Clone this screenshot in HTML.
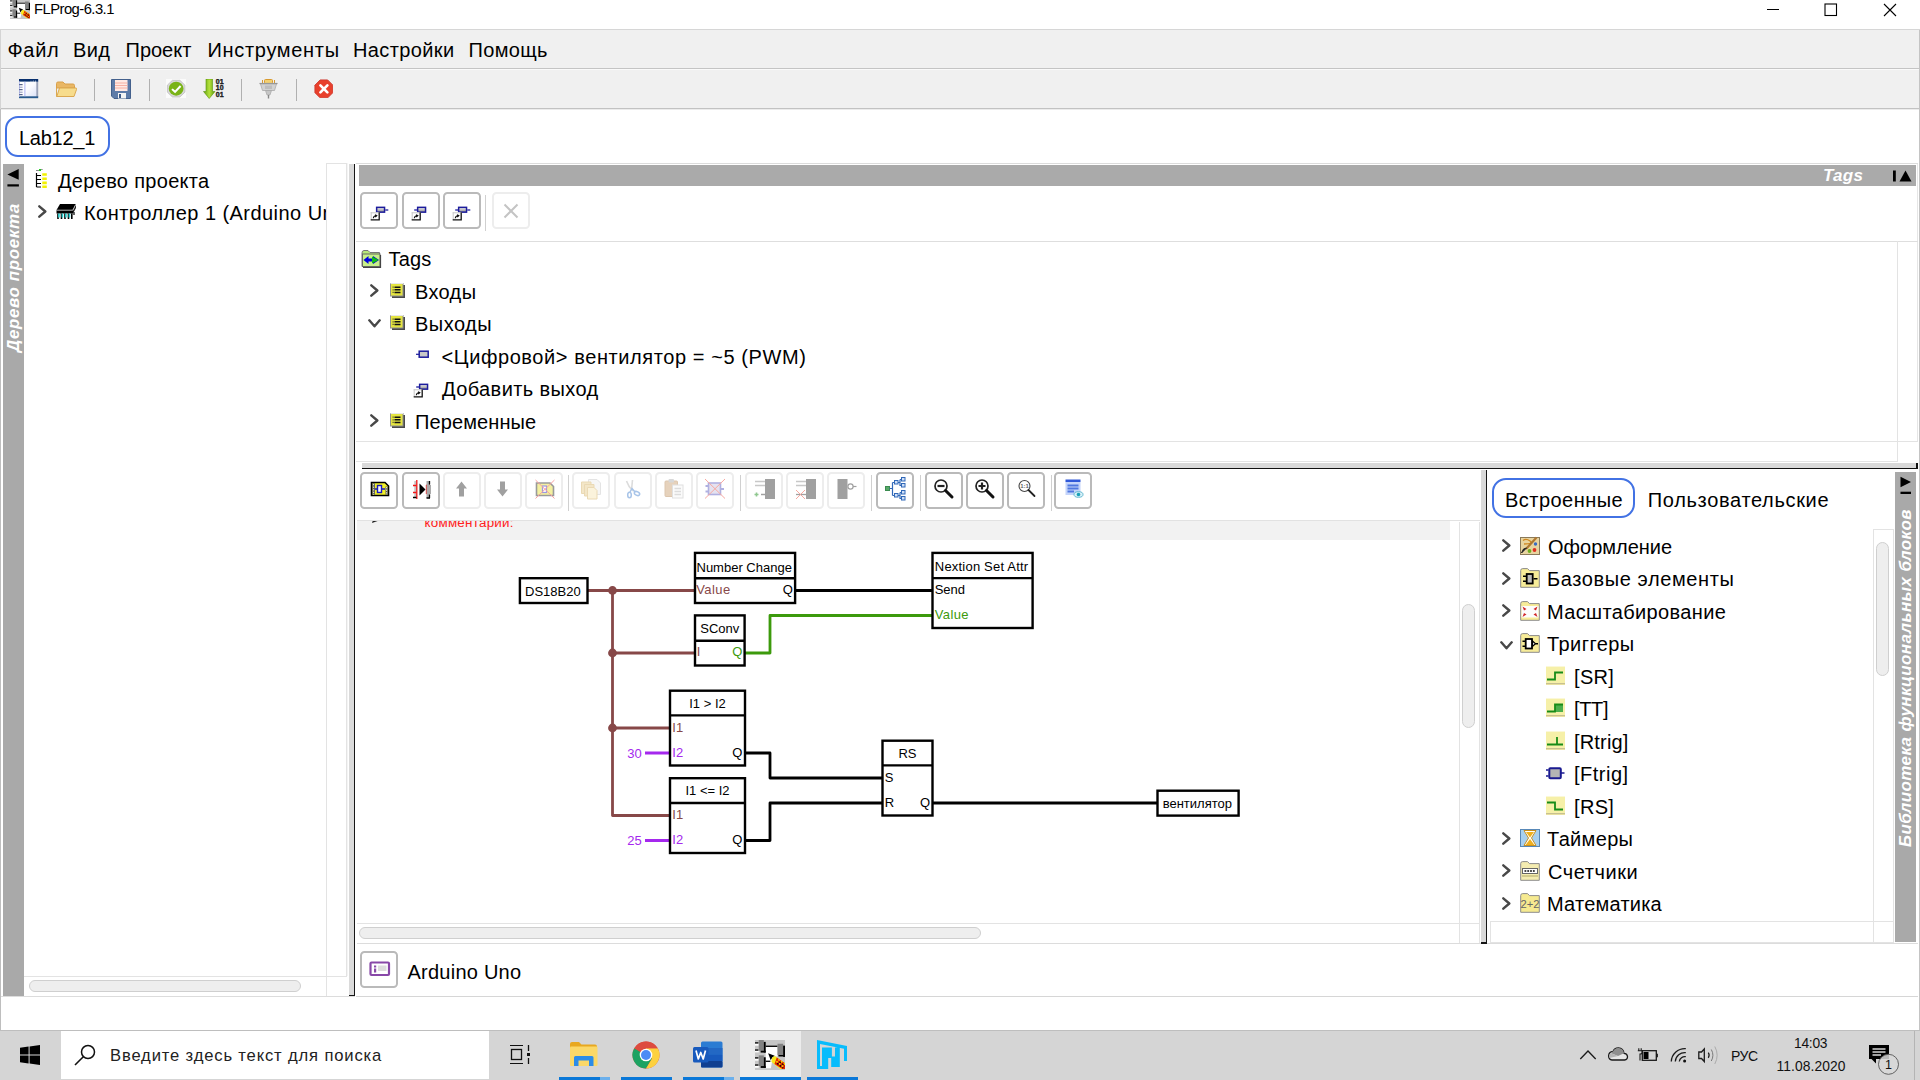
<!DOCTYPE html>
<html lang="ru"><head><meta charset="utf-8"><title>FLProg-6.3.1</title>
<style>
html,body{margin:0;padding:0}
body{width:1920px;height:1080px;overflow:hidden;background:#fff;position:relative;font-family:"Liberation Sans",sans-serif;}
.t{position:absolute;line-height:1;white-space:nowrap;font-family:"Liberation Sans",sans-serif;}
.r{position:absolute;display:block}
.btn{position:absolute;box-sizing:border-box;width:38px;height:37px;margin-left:-0.6px;border:2.3px solid #bababa;border-radius:4.5px;background:#fff}
.btn.dis{border-color:#ededed}
.bi{font-weight:bold;font-style:italic}
svg text{font-family:"Liberation Sans",sans-serif}
</style></head><body>
<!-- ===== window title bar ===== -->
<div id="titlebar">
<svg class="r" style="left:10px;top:-1px;" width="20" height="20" viewBox="0 0 16 16"><rect width="16" height="16" fill="#c6c6c6"/>
<path d="M5.700 3.600H12V8.800H9.500L8.500 15H5.700Z" fill="#fff"/><rect x="0" y="1.800" width="2" height="1.200" fill="#fff"/><rect x="0" y="5.600" width="2" height="1" fill="#fff"/><rect x="0" y="9.800" width="2" height="1.200" fill="#fff"/><rect x="0" y="13.600" width="2" height="1.200" fill="#fff"/>
<rect x="2" y="0" width="2.700" height="5.700" fill="#828282"/><rect x="4.700" y="1" width="1" height="5.700" fill="#000"/><rect x="3" y="5.700" width="2.700" height="1" fill="#000"/>
<rect x="0" y="1.200" width="1.800" height="0.700" fill="#000"/><rect x="0" y="5" width="1.800" height="0.700" fill="#000"/>
<rect x="5.700" y="3" width="6.300" height="0.700" fill="#000"/>
<rect x="12" y="2" width="3" height="6" fill="#828282"/><rect x="15" y="3" width="1" height="6" fill="#000"/><rect x="12.500" y="8" width="3.500" height="0.800" fill="#000"/>
<rect x="2" y="8.200" width="2.700" height="5.700" fill="#828282"/><rect x="4.700" y="9.200" width="1" height="5.700" fill="#000"/><rect x="3" y="13.900" width="2.700" height="1" fill="#000"/>
<rect x="0" y="9.200" width="1.800" height="0.700" fill="#000"/><rect x="0" y="13" width="1.800" height="0.700" fill="#000"/>
<rect x="5.700" y="11" width="2.500" height="0.700" fill="#000"/>
<path d="M7 7L10.500 8.400L9.200 9.300L8.400 10.800Z" fill="#000"/>
<path d="M9.200 9.300L10.600 8.500L16 12.400V15.400H13.400L8.700 11.600Z" fill="#f8e818"/>
<path d="M11.600 9.300L16 12.400V15.400H14.600L10.400 12.800Z" fill="#e42400"/>
<path d="M11.400 11.400L15.500 14.600M12.400 10.400L16 13" stroke="#f8e000" stroke-width="0.800" stroke-dasharray="0.900 0.900"/>
<path d="M11.800 12.400L15 14.900M13 11.600L16 13.800" stroke="#200000" stroke-width="0.800" stroke-dasharray="0.900 0.900"/></svg>
<div class="t" style="left:34.00px;top:2.37px;font-size:14.8px;color:#000;letter-spacing:-0.545px;">FLProg-6.3.1</div>
<svg class="r" style="left:1760px;top:0px;" width="150" height="22" viewBox="0 0 150 22">
<path d="M7 9.5H19" stroke="#000" stroke-width="1"/>
<rect x="65" y="4" width="11.5" height="11.5" fill="none" stroke="#000" stroke-width="1.1"/>
<path d="M124 4L136 16M136 4L124 16" stroke="#000" stroke-width="1.1"/>
</svg>
</div>
<div class="r" style="left:0px;top:29px;width:1920px;height:1px;background:#d6d6d6;"></div>
<!-- ===== menu bar ===== -->
<div id="menubar">
<div class="r" style="left:1px;top:30px;width:1918px;height:38px;background:#f0f0f0;"></div>
<div class="t" style="left:7.50px;top:40.07px;font-size:20px;color:#000;letter-spacing:0.667px;">Файл</div>
<div class="t" style="left:73.00px;top:40.07px;font-size:20px;color:#000;letter-spacing:0.400px;">Вид</div>
<div class="t" style="left:125.50px;top:40.07px;font-size:20px;color:#000;">Проект</div>
<div class="t" style="left:207.50px;top:40.07px;font-size:20px;color:#000;letter-spacing:0.680px;">Инструменты</div>
<div class="t" style="left:353.00px;top:40.07px;font-size:20px;color:#000;letter-spacing:0.377px;">Настройки</div>
<div class="t" style="left:468.50px;top:40.07px;font-size:20px;color:#000;letter-spacing:0.320px;">Помощь</div>
</div>
<div class="r" style="left:0px;top:68px;width:1919px;height:1px;background:#c4c4c4;"></div>
<!-- ===== main toolbar ===== -->
<div id="toolbar">
<div class="r" style="left:1px;top:69px;width:1918px;height:39px;background:#f0f0f0;"></div>
<div class="r" style="left:1px;top:69px;width:1918px;height:1px;background:#fafafa;"></div>
<svg class="r" style="left:18.7px;top:78.9px;" width="20" height="20" viewBox="0 0 20 20">
<defs><linearGradient id="g1" x1="0" y1="0" x2="1" y2="1"><stop offset="0" stop-color="#fff"/><stop offset="0.5" stop-color="#fbfbff"/><stop offset="1" stop-color="#d4dcf6"/></linearGradient></defs>
<rect x="0.300" y="0.300" width="18.700" height="18.700" fill="url(#g1)"/>
<rect x="17.300" y="2" width="1.900" height="16" fill="#9aa2b8"/>
<rect x="0" y="0" width="19.200" height="2.600" fill="#08306e"/>
<path d="M11.500 2.600L12 1.500L12.500 2.600ZM13.500 2.600L14.200 1.200L14.800 2.600ZM16 2.600L16.600 1.200L17.200 2.600Z" fill="#fff"/>
<rect x="0" y="17.300" width="19.200" height="1.900" fill="#285a8e"/>
<rect x="0" y="2.600" width="0.900" height="15" fill="#b8c0f0"/>
<path d="M5.900 2.600V17.300" stroke="#a4acf2" stroke-width="0.900"/>
<path d="M0.200 5.700h3.400M0.200 10.700h3.400M0.200 15.700h3.400" stroke="#1a2a60" stroke-width="0.900"/><path d="M0.200 8.200h3.400M0.200 13.200h3.400" stroke="#8088b0" stroke-width="0.900"/>
</svg>
<svg class="r" style="left:56px;top:80px;" width="21" height="18" viewBox="0 0 21 18">
<path d="M0.500 3.5 Q0.5 2 2 2 H7 L9 4 H17 Q18.5 4 18.5 5.5 V8 H0.5Z" fill="#e9b765" stroke="#d9a04a" stroke-width="1"/>
<path d="M3.500 8 H20 Q21 8 20.500 9.500 L18 16.500 H0.800 Z" fill="#f7dc8c" stroke="#dba850" stroke-width="1"/>
<path d="M0.500 8 V16.5 H2" fill="none" stroke="#dba850" stroke-width="1"/>
</svg>
<div class="r" style="left:94px;top:79px;width:1px;height:22px;background:#b0b0b0;"></div>
<svg class="r" style="left:111px;top:79px;" width="21" height="21" viewBox="0 0 21 21">
<path d="M0.500 0.500 H19.500 V19.500 H3 L0.500 17Z" fill="#5d7ba8" stroke="#43608c" stroke-width="1"/>
<rect x="4" y="1" width="12.500" height="11" fill="#ffe9e4"/>
<path d="M4 4h12.500M4 6.500h12.500M4 9h12.500" stroke="#f6a99c" stroke-width="0.9"/>
<rect x="7" y="14" width="8" height="5.500" fill="#f4f4f4"/>
<rect x="8" y="15" width="2" height="4" fill="#3c5a88"/>
</svg>
<div class="r" style="left:149px;top:79px;width:1px;height:22px;background:#b0b0b0;"></div>
<svg class="r" style="left:166px;top:79px" width="20.300" height="19.300" viewBox="0 0 22 22" preserveAspectRatio="none">
<rect width="22" height="22" fill="#fbfbfb"/>
<path d="M7 1.500H15L20.500 7V15L15 20.500H7L1.500 15V7Z" fill="#d8d8d8" stroke="#c2c2c2" stroke-width="1"/>
<circle cx="11" cy="11" r="8" fill="#7ab317"/>
<path d="M6.500 11.500L9.800 14.600L15.800 8" fill="none" stroke="#fff" stroke-width="2.200"/>
</svg>
<svg class="r" style="left:203px;top:79px;" width="22" height="20" viewBox="0 0 22 20">
<defs><linearGradient id="g5" x1="0" x2="1"><stop offset="0" stop-color="#5e9c0c"/><stop offset="0.5" stop-color="#b5e23c"/><stop offset="1" stop-color="#5e9c0c"/></linearGradient></defs>
<path d="M3 0H9.500V12.500H12L6.200 19.500L0.500 12.500H3Z" fill="url(#g5)" stroke="#5a960a" stroke-width="0.6"/>
<g font-size="7" font-weight="bold" fill="#1c1c1c" stroke="#1c1c1c" stroke-width="0.350"><text x="12.800" y="4.800">01</text><text x="12.800" y="11.200">10</text><text x="12.800" y="18">01</text></g>
</svg>
<div class="r" style="left:241px;top:79px;width:1px;height:22px;background:#b0b0b0;"></div>
<svg class="r" style="left:259px;top:79px;" width="20" height="20" viewBox="0 0 20 20">
<rect x="5.500" y="0.500" width="8" height="4" rx="1" fill="#f3d070" stroke="#d89a30" stroke-width="1"/>
<path d="M3.500 1V4M15.500 1V4" stroke="#d89a30" stroke-width="1"/>
<path d="M0.500 4.500H18.500" stroke="#8e8e8e" stroke-width="1.200"/>
<path d="M1.500 5H17.500L15.500 11.500H3.500Z" fill="#d2d2d2" stroke="#aaa" stroke-width="0.8"/>
<rect x="6" y="6.500" width="7" height="3.500" fill="#bdbdbd"/>
<path d="M6.500 11.500H12.500L11 16H8Z" fill="#c6c6c6" stroke="#a6a6a6" stroke-width="0.7"/>
<path d="M9.500 16V19.500" stroke="#888" stroke-width="1.400"/>
</svg>
<div class="r" style="left:296px;top:79px;width:1px;height:22px;background:#b0b0b0;"></div>
<svg class="r" style="left:313.5px;top:78.7px;" width="19.8" height="19.8" viewBox="0 0 21 21">
<path d="M6.500 1H14.500L20 6.500V14.500L14.500 20H6.500L1 14.500V6.500Z" fill="#e8402c" stroke="#cf3a30" stroke-width="1"/>
<path d="M6.800 6.800L14.200 14.200M14.200 6.800L6.800 14.200" stroke="#fff" stroke-width="2.800" stroke-linecap="round"/>
</svg>
</div>
<div class="r" style="left:0px;top:108px;width:1919px;height:1px;background:#c2c2c2;"></div>
<div class="r" style="left:1px;top:109px;width:1918px;height:1px;background:#ececec;"></div>
<div class="r" style="left:0px;top:30px;width:1px;height:79px;background:#d4d4d4;"></div>
<div class="r" style="left:0px;top:109px;width:1px;height:922px;background:#bebebe;"></div>
<div class="r" style="left:1919px;top:30px;width:1px;height:1001px;background:#c4c4c4;"></div>
<div class="r" style="left:1917px;top:163px;width:1px;height:279px;background:#e6e6e6;"></div>
<div class="r" style="left:0px;top:1030px;width:1920px;height:1px;background:#bebebe;"></div>
<!-- ===== project tab ===== -->
<div class="r" style="left:5px;top:116px;width:105px;height:41px;box-sizing:border-box;border:2px solid #4272e4;border-radius:13px"></div>
<div class="t" style="left:19.00px;top:128.07px;font-size:20px;color:#000;letter-spacing:-0.267px;">Lab12_1</div>
<!-- ===== left: project tree panel ===== -->
<div id="projtree">
<div class="r" style="left:3px;top:164px;width:21px;height:832px;background:#a9a9a9;"></div>
<svg class="r" style="left:7px;top:168px;" width="14" height="20" viewBox="0 0 14 20"><path d="M11.700 1V11.800L0.400 6.400Z" fill="#000"/><rect x="0.400" y="16.300" width="11.500" height="2.200" fill="#000"/></svg>
<div class="t bi" style="left:4px;top:351.500px;font-size:17px;letter-spacing:0.600px;color:#fff;transform-origin:0 0;transform:rotate(-90deg);width:150px;height:19px;line-height:19px;">Дерево проекта</div>
<svg class="r" style="left:32px;top:169px;" width="16" height="20" viewBox="0 0 16 20">
<path d="M4 1.500h3M9 0.500L11 0" stroke="#888" stroke-width="1"/><rect x="7" y="0" width="2" height="2" fill="#2c2"/>
<path d="M4.500 4V18M4.500 6.500H9M4.500 10.500H9M4.500 14.500H9M4.500 18H9" fill="none" stroke="#000" stroke-width="1.200"/>
<path d="M10.300 5.500h4.500M10.300 9.700h4.500M10.300 13.900h4.500M10.300 17.800h4.500" stroke="#f2f200" stroke-width="2.600"/>
</svg>
<div class="t" style="left:58.00px;top:170.57px;font-size:20px;color:#000;letter-spacing:0.307px;">Дерево проекта</div>
<svg class="r" style="left:38px;top:204.8px;" width="9" height="13" viewBox="0 0 9 13"><path d="M1.300 1.300L7.300 6.500L1.300 11.700" fill="none" stroke="#484848" stroke-width="2.400" stroke-linecap="round" stroke-linejoin="round"/></svg>
<svg class="r" style="left:56px;top:203px;" width="21" height="18" viewBox="0 0 21 18">
<path d="M4 1H20L17 7H0.500Z" fill="#000"/>
<rect x="0.500" y="7" width="16.500" height="3.500" fill="#000"/>
<path d="M17 7L20 1V5L17 10.500Z" fill="#222"/>
<path d="M2 10.500V16M5.500 10.500V16M9 10.500V16M12.500 10.500V16M15.800 10.500V16" stroke="#000" stroke-width="1.600"/>
<path d="M2.900 10.500V14.500M6.400 10.500V14.500M9.900 10.500V14.500M13.400 10.500V14.500" stroke="#28d0d0" stroke-width="1.600"/>
<path d="M18 9V12" stroke="#000" stroke-width="1.200"/><path d="M0.500 7.200H16.800L19.800 1.300" fill="none" stroke="#fff" stroke-width="0.700"/>
</svg>
<div class="r" style="left:80px;top:196px;width:246px;height:32px;overflow:hidden"><div class="t" style="left:4.00px;top:7.07px;font-size:20px;color:#000;letter-spacing:0.45px;">Контроллер 1 (Arduino Uno)</div>
</div>
<div class="r" style="left:326px;top:163px;width:21px;height:1px;background:#e3e3e3;"></div>
<div class="r" style="left:326px;top:163px;width:1px;height:833px;background:#e3e3e3;"></div>
<div class="r" style="left:346px;top:163px;width:1px;height:813px;background:#e3e3e3;"></div>
<div class="r" style="left:347px;top:163px;width:1px;height:813px;background:#f4f4f4;"></div>
<div class="r" style="left:24px;top:976px;width:323px;height:1px;background:#e3e3e3;"></div>
<div class="r" style="left:1px;top:996px;width:354px;height:1px;background:#dcdcdc;"></div>
<div class="r" style="left:29px;top:980px;width:272px;height:12px;box-sizing:border-box;border:1px solid #cfcfcf;border-radius:6px;background:#eee"></div>
</div>
<div class="r" style="left:349px;top:164px;width:4.7px;height:832px;background:#dadada;"></div>
<div class="r" style="left:353.6px;top:164px;width:1.6px;height:832px;background:#161616;"></div>
<div class="r" style="left:349px;top:994.7px;width:6px;height:1.5px;background:#161616;"></div>
<!-- ===== tags panel ===== -->
<div id="tags">
<div class="r" style="left:356px;top:163px;width:1562px;height:1px;background:#dcdcdc;"></div>
<div class="r" style="left:359px;top:165.2px;width:1557px;height:21.2px;background:#aaaaaa;"></div>
<div class="t bi" style="left:1823.00px;top:166.91px;font-size:17px;color:#fff;letter-spacing:0.333px;">Tags</div>
<svg class="r" style="left:1892px;top:170px;" width="21" height="12" viewBox="0 0 21 12"><rect x="1" y="0.500" width="2.800" height="11" fill="#000"/><path d="M7.500 11.500L13.500 0.500L19.500 11.500Z" fill="#000"/></svg>
<div class="btn" style="left:361px;top:191.700px"></div>
<svg class="r" style="left:369.7px;top:205.7px;" width="19" height="16" viewBox="0 0 19 16"><defs><linearGradient id="gio" x1="0" y1="0" x2="0" y2="1"><stop offset="0" stop-color="#f4f4f4"/><stop offset="1" stop-color="#8a8a8a"/></linearGradient></defs>
<rect x="6.650" y="1.350" width="7.900" height="4.800" fill="url(#gio)" stroke="#1c1c9c" stroke-width="1.500"/><path d="M15.300 4H18.300" stroke="#1c1c9c" stroke-width="1.300"/>
<rect x="0.700" y="6.300" width="9" height="8" fill="#fff"/>
<path d="M0.700 6.800H9M1.200 6.300V14" stroke="#c8c8c8" stroke-width="1" fill="none"/>
<path d="M9.200 6.300V13.800H0.700" stroke="#111" stroke-width="1.300" fill="none"/>
<path d="M3.300 12.300Q3.500 9.800 6.300 9.700M5 8.800L6.800 9.700L5.300 11.200" fill="none" stroke="#111" stroke-width="1.100"/></svg>
<div class="btn" style="left:402.25px;top:191.700px"></div>
<svg class="r" style="left:410.95px;top:205.7px;" width="19" height="16" viewBox="0 0 19 16"><defs><linearGradient id="gio" x1="0" y1="0" x2="0" y2="1"><stop offset="0" stop-color="#f4f4f4"/><stop offset="1" stop-color="#8a8a8a"/></linearGradient></defs>
<rect x="6.650" y="1.350" width="7.900" height="4.800" fill="url(#gio)" stroke="#1c1c9c" stroke-width="1.500"/><path d="M3.200 4H6" stroke="#1c1c9c" stroke-width="1.300"/>
<rect x="0.700" y="6.300" width="9" height="8" fill="#fff"/>
<path d="M0.700 6.800H9M1.200 6.300V14" stroke="#c8c8c8" stroke-width="1" fill="none"/>
<path d="M9.200 6.300V13.800H0.700" stroke="#111" stroke-width="1.300" fill="none"/>
<path d="M3.300 12.300Q3.500 9.800 6.300 9.700M5 8.800L6.800 9.700L5.300 11.200" fill="none" stroke="#111" stroke-width="1.100"/></svg>
<div class="btn" style="left:443.5px;top:191.700px"></div>
<svg class="r" style="left:452.2px;top:205.7px;" width="19" height="16" viewBox="0 0 19 16"><defs><linearGradient id="gio" x1="0" y1="0" x2="0" y2="1"><stop offset="0" stop-color="#f4f4f4"/><stop offset="1" stop-color="#8a8a8a"/></linearGradient></defs>
<rect x="6.650" y="1.350" width="7.900" height="4.800" fill="url(#gio)" stroke="#1c1c9c" stroke-width="1.500"/><path d="M15.300 4H18.300" stroke="#1c1c9c" stroke-width="1.300"/><path d="M3.200 4H6" stroke="#1c1c9c" stroke-width="1.300"/>
<rect x="0.700" y="6.300" width="9" height="8" fill="#fff"/>
<path d="M0.700 6.800H9M1.200 6.300V14" stroke="#c8c8c8" stroke-width="1" fill="none"/>
<path d="M9.200 6.300V13.800H0.700" stroke="#111" stroke-width="1.300" fill="none"/>
<path d="M3.300 12.300Q3.500 9.800 6.300 9.700M5 8.800L6.800 9.700L5.300 11.200" fill="none" stroke="#111" stroke-width="1.100"/></svg>
<div class="r" style="left:485px;top:195px;width:1px;height:36px;background:#d0d0d0;"></div>
<div class="btn dis" style="left:492.500px;top:191.700px"></div>
<svg class="r" style="left:503px;top:202.5px;" width="16" height="16" viewBox="0 0 16 16"><path d="M1.500 1.500L14.500 14.500M14.500 1.500L1.500 14.500" stroke="#c4c4c4" stroke-width="2"/></svg>
<div class="r" style="left:356px;top:241px;width:1562px;height:1px;background:#dedede;"></div>
<div class="r" style="left:1897px;top:241px;width:1px;height:220px;background:#e3e3e3;"></div>
<svg class="r" style="left:361px;top:249px;" width="21" height="19" viewBox="0 0 21 19">
<path d="M1 4Q1 1.500 3 1.500H7L9 3.500H18.500V17.500H1Z" fill="#b8e878" stroke="#777" stroke-width="1"/>
<rect x="1.500" y="5" width="17.500" height="12.500" fill="#c8f088" stroke="#666" stroke-width="1"/>
<path d="M19.500 6V18.500H2" fill="none" stroke="#444" stroke-width="1.200"/>
<path d="M2.500 11L7.500 7V9.500H12V7L18 11L12 15V12.500H7.500V15Z" fill="#0000e0"/>
<path d="M11 7.500L17.500 11L11 14.500Z" fill="#10c010"/>
</svg>
<div class="t" style="left:388.50px;top:249.32px;font-size:20px;color:#000;letter-spacing:0.200px;">Tags</div>
<svg class="r" style="left:370px;top:284px;" width="9" height="13" viewBox="0 0 9 13"><path d="M1.300 1.300L7.300 6.500L1.300 11.700" fill="none" stroke="#484848" stroke-width="2.400" stroke-linecap="round" stroke-linejoin="round"/></svg>
<svg class="r" style="left:390px;top:282.5px;" width="16" height="16" viewBox="0 0 16 16"><rect x="2" y="2" width="13" height="13" fill="#4a4a4a"/>
<rect x="0.500" y="0.500" width="12.500" height="12.500" fill="#e4e440" stroke="#909090" stroke-width="1"/>
<path d="M0.500 0.500H13" stroke="#e8e8e8" stroke-width="1"/>
<path d="M4.500 4.200H10.500M4.500 6.800H10.500M4.500 9.400H10.500" stroke="#111" stroke-width="1.500"/>
<path d="M2.600 4.200H3.600M2.600 6.800H3.600M2.600 9.400H3.600" stroke="#333" stroke-width="1.200"/></svg>
<div class="t" style="left:415.00px;top:281.82px;font-size:20px;color:#000;letter-spacing:0.350px;">Входы</div>
<svg class="r" style="left:368px;top:319px;" width="13" height="9" viewBox="0 0 13 9"><path d="M1.300 1.300L6.500 7.300L11.700 1.300" fill="none" stroke="#484848" stroke-width="2.400" stroke-linecap="round" stroke-linejoin="round"/></svg>
<svg class="r" style="left:390px;top:315px;" width="16" height="16" viewBox="0 0 16 16"><rect x="2" y="2" width="13" height="13" fill="#4a4a4a"/>
<rect x="0.500" y="0.500" width="12.500" height="12.500" fill="#e4e440" stroke="#909090" stroke-width="1"/>
<path d="M0.500 0.500H13" stroke="#e8e8e8" stroke-width="1"/>
<path d="M4.500 4.200H10.500M4.500 6.800H10.500M4.500 9.400H10.500" stroke="#111" stroke-width="1.500"/>
<path d="M2.600 4.200H3.600M2.600 6.800H3.600M2.600 9.400H3.600" stroke="#333" stroke-width="1.200"/></svg>
<div class="t" style="left:415.00px;top:314.32px;font-size:20px;color:#000;letter-spacing:0.480px;">Выходы</div>
<svg class="r" style="left:416px;top:350px;" width="14" height="9" viewBox="0 0 14 9"><path d="M0 4.300H3" stroke="#1c1c9c" stroke-width="1.200"/><rect x="3.200" y="1.200" width="9" height="6" fill="#c8c8c8" stroke="#1c1c9c" stroke-width="1.500"/></svg>
<div class="t" style="left:441.50px;top:346.82px;font-size:20px;color:#000;letter-spacing:0.587px;">&lt;Цифровой&gt; вентилятор = ~5 (PWM)</div>
<svg class="r" style="left:413.2px;top:383px;" width="19" height="16" viewBox="0 0 19 16"><defs><linearGradient id="gio" x1="0" y1="0" x2="0" y2="1"><stop offset="0" stop-color="#f4f4f4"/><stop offset="1" stop-color="#8a8a8a"/></linearGradient></defs>
<rect x="6.650" y="1.350" width="7.900" height="4.800" fill="url(#gio)" stroke="#1c1c9c" stroke-width="1.500"/><path d="M3.200 4H6" stroke="#1c1c9c" stroke-width="1.300"/>
<rect x="0.700" y="6.300" width="9" height="8" fill="#fff"/>
<path d="M0.700 6.800H9M1.200 6.300V14" stroke="#c8c8c8" stroke-width="1" fill="none"/>
<path d="M9.200 6.300V13.800H0.700" stroke="#111" stroke-width="1.300" fill="none"/>
<path d="M3.300 12.300Q3.500 9.800 6.300 9.700M5 8.800L6.800 9.700L5.300 11.200" fill="none" stroke="#111" stroke-width="1.100"/></svg>
<div class="t" style="left:442.00px;top:379.32px;font-size:20px;color:#000;letter-spacing:0.400px;">Добавить выход</div>
<svg class="r" style="left:370px;top:414px;" width="9" height="13" viewBox="0 0 9 13"><path d="M1.300 1.300L7.300 6.500L1.300 11.700" fill="none" stroke="#484848" stroke-width="2.400" stroke-linecap="round" stroke-linejoin="round"/></svg>
<svg class="r" style="left:390px;top:412.5px;" width="16" height="16" viewBox="0 0 16 16"><rect x="2" y="2" width="13" height="13" fill="#4a4a4a"/>
<rect x="0.500" y="0.500" width="12.500" height="12.500" fill="#e4e440" stroke="#909090" stroke-width="1"/>
<path d="M0.500 0.500H13" stroke="#e8e8e8" stroke-width="1"/>
<path d="M4.500 4.200H10.500M4.500 6.800H10.500M4.500 9.400H10.500" stroke="#111" stroke-width="1.500"/>
<path d="M2.600 4.200H3.600M2.600 6.800H3.600M2.600 9.400H3.600" stroke="#333" stroke-width="1.200"/></svg>
<div class="t" style="left:415.00px;top:411.82px;font-size:20px;color:#000;letter-spacing:0.111px;">Переменные</div>
<div class="r" style="left:356px;top:441px;width:1562px;height:1px;background:#e3e3e3;"></div>
<div class="r" style="left:356px;top:461px;width:1542px;height:1px;background:#e3e3e3;"></div>
<div class="r" style="left:362px;top:463px;width:1556px;height:5px;background:#d9d9d9;"></div>
<div class="r" style="left:362px;top:467.6px;width:1556px;height:1.7px;background:#111;"></div>
<div class="r" style="left:1916.3px;top:463px;width:1.5px;height:5px;background:#111;"></div>
</div>
<!-- ===== editor toolbar ===== -->
<div id="edtoolbar">
<div class="btn" style="left:361px;top:471.6px"><svg class="r" style="left:-1.700px;top:-2.300px" width="37" height="37" viewBox="0 0 37 37"><path d="M10.500 11.500H24L27.500 15V24.500H10.500Z" fill="#f0f028" stroke="#000" stroke-width="1.600"/>
<path d="M11.300 12.300H14V23.700H11.300ZM24.500 15.500H26.700V23.700H24.500Z" fill="#5c5c5c"/>
<path d="M12.600 13V24M25.600 16V24" stroke="#e8e8e8" stroke-width="1" stroke-dasharray="1.300 1.300"/>
<rect x="16.500" y="14.500" width="4" height="7" fill="#fff" stroke="#1818c0" stroke-width="1.400"/><path d="M14 18H16.500M20.500 18H24" stroke="#1818c0" stroke-width="1.300"/></svg></div>
<div class="btn" style="left:402.25px;top:471.6px"><svg class="r" style="left:-1.700px;top:-2.300px" width="37" height="37" viewBox="0 0 37 37"><rect x="12.300" y="10" width="2.200" height="17" fill="#c4c4c4"/><path d="M14.800 9V28M24.500 14V23" stroke="#f01818" stroke-width="1.300"/>
<path d="M11 14.500H14.500M11 21.500H14.500M24.500 14H28M24.500 22.500H28" stroke="#f01818" stroke-width="1.300"/>
<path d="M11 26.500H14.500" stroke="#000" stroke-width="1.500"/>
<path d="M17.500 12.500L23.500 18.500L17.500 24.500Z" fill="#000"/>
<path d="M24.500 10H27.500V14H29V23H27.500V27H24.500Z" fill="#aaa"/><path d="M27.500 10V13.500M27.500 23.500V27M24.500 27H28" stroke="#000" stroke-width="1.300"/></svg></div>
<div class="btn dis" style="left:443.5px;top:471.6px"><svg class="r" style="left:-1.700px;top:-2.300px" width="37" height="37" viewBox="0 0 37 37"><path d="M18.500 10.500L24 17.500H21V25.500H16V17.500H13Z" fill="#a0a0a0"/></svg></div>
<div class="btn dis" style="left:484.75px;top:471.6px"><svg class="r" style="left:-1.700px;top:-2.300px" width="37" height="37" viewBox="0 0 37 37"><path d="M18.500 25.500L24 18.500H21V10.500H16V18.500H13Z" fill="#a0a0a0"/></svg></div>
<div class="btn dis" style="left:526px;top:471.6px"><svg class="r" style="left:-1.700px;top:-2.300px" width="37" height="37" viewBox="0 0 37 37"><path d="M10.500 12H24L27.500 15.500V24.500H10.500Z" fill="#f4f0a0" stroke="#9a9a9a" stroke-width="1.600"/>
<rect x="16.500" y="15" width="4" height="6.500" fill="#fff" stroke="#9a9ae0" stroke-width="1.200"/>
<path d="M9.500 9L28.500 27.500M28.500 9L9.500 27.500" stroke="#f8a0a0" stroke-width="1"/></svg></div>
<div class="btn dis" style="left:573px;top:471.6px"><svg class="r" style="left:-1.700px;top:-2.300px" width="37" height="37" viewBox="0 0 37 37"><path d="M15.500 8.500H24L27.500 12V23.500H15.500Z" fill="#f6f6f6" stroke="#e4e4e4"/>
<path d="M8.500 11H18V22.500H8.500Z" fill="#f3e6c8" stroke="#ead9b4"/>
<path d="M11.500 13.500H21V25H11.500Z" fill="#f3e6c8" stroke="#ead9b4"/>
<path d="M14.500 16.500H21L24 19.500V28H14.500Z" fill="#fbf3dc" stroke="#ead9b4"/></svg></div>
<div class="btn dis" style="left:614.25px;top:471.6px"><svg class="r" style="left:-1.700px;top:-2.300px" width="37" height="37" viewBox="0 0 37 37"><path d="M12.500 10Q14.500 16 19 20M18.500 9L17.500 19" fill="none" stroke="#dcdcdc" stroke-width="1.600"/>
<ellipse cx="15.500" cy="24" rx="1.800" ry="2.800" fill="none" stroke="#a8c4e8" stroke-width="1.500"/>
<ellipse cx="23" cy="22.500" rx="2.800" ry="1.800" fill="none" stroke="#a8c4e8" stroke-width="1.500" transform="rotate(25 23 22.500)"/>
<path d="M16 21L18 17.500L21 21" fill="none" stroke="#a8c4e8" stroke-width="1.500"/></svg></div>
<div class="btn dis" style="left:655.5px;top:471.6px"><svg class="r" style="left:-1.700px;top:-2.300px" width="37" height="37" viewBox="0 0 37 37"><rect x="10" y="10" width="12.500" height="15.500" rx="1" fill="#e6d2bc" stroke="#dcc6ae"/>
<rect x="13.500" y="8" width="5.500" height="3.500" rx="1" fill="#d8d8d8"/>
<rect x="17.500" y="14" width="10.500" height="13" fill="#fbfbfb" stroke="#e0e0e0"/>
<path d="M19.500 17.500H26M19.500 20.500H26M19.500 23.500H26" stroke="#dcdcdc" stroke-width="1.300"/></svg></div>
<div class="btn dis" style="left:696.75px;top:471.6px"><svg class="r" style="left:-1.700px;top:-2.300px" width="37" height="37" viewBox="0 0 37 37"><rect x="12.500" y="12" width="12" height="11.500" fill="#e4e2f0" stroke="#b0b0e0" stroke-width="1.600"/>
<path d="M9.500 15H12.500M9.500 20.500H12.500M24.500 18H28" stroke="#b0b0e0" stroke-width="1.800"/>
<path d="M9 8L29 27.500M29 8L9 27.500" stroke="#f8a8a0" stroke-width="1"/></svg></div>
<div class="btn dis" style="left:745.5px;top:471.6px"><svg class="r" style="left:-1.700px;top:-2.300px" width="37" height="37" viewBox="0 0 37 37"><rect x="20" y="8" width="10" height="20" fill="#a0a0a0"/><path d="M10 10.500H20M10 14.500H20" stroke="#c8c8c8" stroke-width="1.300"/>
<path d="M16 23.500H20" stroke="#a0a0a0" stroke-width="1.500"/><path d="M11.500 21.500V25.500M9.500 23.500H13.500" stroke="#90c890" stroke-width="1.600"/></svg></div>
<div class="btn dis" style="left:786.75px;top:471.6px"><svg class="r" style="left:-1.700px;top:-2.300px" width="37" height="37" viewBox="0 0 37 37"><rect x="20" y="8" width="10" height="20" fill="#a0a0a0"/><path d="M10 10.500H20M10 14.500H20" stroke="#c8c8c8" stroke-width="1.300"/>
<path d="M10 23.500H20" stroke="#a0a0a0" stroke-width="1.300"/><path d="M10 19L19 28M19 19L10 28" stroke="#f8a8a0" stroke-width="1"/></svg></div>
<div class="btn dis" style="left:828px;top:471.6px"><svg class="r" style="left:-1.700px;top:-2.300px" width="37" height="37" viewBox="0 0 37 37"><rect x="9.500" y="8" width="10" height="20" fill="#a0a0a0"/><circle cx="22.500" cy="15.500" r="2.600" fill="#fff" stroke="#a0a0a0" stroke-width="1.200"/><path d="M25 15.500H28.500" stroke="#a0a0a0" stroke-width="1.200"/></svg></div>
<div class="btn" style="left:876.5px;top:471.6px"><svg class="r" style="left:-1.700px;top:-2.300px" width="37" height="37" viewBox="0 0 37 37"><rect x="9.500" y="15.500" width="4" height="4" fill="#58a868" stroke="#3c8c50"/>
<path d="M13.500 17.500H16.500M16.500 11.500V24.500M16.500 11.500H19M16.500 24.500H19M22 11.500H24M24 8.500V14.500H26M24 8.500H26M22 24.500H24M24 21.500V27.500H26M24 21.500H26" fill="none" stroke="#3068b8" stroke-width="1.200"/>
<rect x="18.500" y="9.500" width="3.500" height="3.500" fill="#d0e0f8" stroke="#3068b8"/><rect x="18.500" y="22.500" width="3.500" height="3.500" fill="#d0e0f8" stroke="#3068b8"/>
<rect x="25.500" y="6.500" width="3.500" height="3.500" fill="#d0e0f8" stroke="#3068b8"/><rect x="25.500" y="12.500" width="3.500" height="3.500" fill="#d0e0f8" stroke="#3068b8"/>
<rect x="25.500" y="19.500" width="3.500" height="3.500" fill="#d0e0f8" stroke="#3068b8"/><rect x="25.500" y="25.500" width="3.500" height="3.500" fill="#d0e0f8" stroke="#3068b8"/></svg></div>
<div class="btn" style="left:925.5px;top:471.6px"><svg class="r" style="left:-1.700px;top:-2.300px" width="37" height="37" viewBox="0 0 37 37"><circle cx="16" cy="15" r="6" fill="#fff" stroke="#222" stroke-width="1.700"/><path d="M20.500 19.500L27 26" stroke="#111" stroke-width="3" stroke-linecap="round"/><path d="M12.500 15H19.500" stroke="#222" stroke-width="2.200"/></svg></div>
<div class="btn" style="left:966.75px;top:471.6px"><svg class="r" style="left:-1.700px;top:-2.300px" width="37" height="37" viewBox="0 0 37 37"><circle cx="16" cy="15" r="6" fill="#fff" stroke="#222" stroke-width="1.700"/><path d="M20.500 19.500L27 26" stroke="#111" stroke-width="3" stroke-linecap="round"/><path d="M12.500 15H19.500M16 11.500V18.500" stroke="#222" stroke-width="2.200"/></svg></div>
<div class="btn" style="left:1008px;top:471.6px"><svg class="r" style="left:-1.700px;top:-2.300px" width="37" height="37" viewBox="0 0 37 37"><circle cx="16.500" cy="15" r="5.500" fill="#fff" stroke="#444" stroke-width="1.100"/><path d="M20.500 19L26.500 25" stroke="#222" stroke-width="1.800" stroke-linecap="round"/><text x="16.500" y="17.300" font-size="6" font-weight="bold" text-anchor="middle" fill="#666">1:1</text></svg></div>
<div class="btn" style="left:1055px;top:471.6px"><svg class="r" style="left:-1.700px;top:-2.300px" width="37" height="37" viewBox="0 0 37 37"><rect x="10.500" y="8.500" width="15" height="2.500" fill="#3058d8"/><rect x="10.500" y="11" width="15" height="13" fill="#c4d4fa"/>
<path d="M12.500 14.500H23.500M12.500 17.500H23.500M12.500 20.500H19" stroke="#5078e0" stroke-width="1.800"/>
<ellipse cx="23.500" cy="23.500" rx="4.500" ry="2.800" fill="#d8f0f8" stroke="#60b8d0" stroke-width="1"/><circle cx="23.500" cy="23.500" r="1.800" fill="#18a0b8"/></svg></div>
<div class="r" style="left:568px;top:475px;width:1px;height:36px;background:#d0d0d0;"></div>
<div class="r" style="left:739.5px;top:475px;width:1px;height:36px;background:#d0d0d0;"></div>
<div class="r" style="left:870.5px;top:475px;width:1px;height:36px;background:#d0d0d0;"></div>
<div class="r" style="left:919.5px;top:475px;width:1px;height:36px;background:#d0d0d0;"></div>
<div class="r" style="left:1051px;top:475px;width:1px;height:36px;background:#d0d0d0;"></div>
</div>
<!-- ===== FBD canvas ===== -->
<div id="canvas">
<div class="r" style="left:357px;top:520.4px;width:1123px;height:1px;background:#e2e2e2;"></div>
<div class="r" style="left:357px;top:521.3px;width:1093px;height:19px;background:#f2f2f2;"></div>
<div class="r" style="left:357px;top:520.800px;width:1093px;height:19px;overflow:hidden"><div class="t" style="left:67.50px;top:-4.64px;font-size:13.4px;color:#ff2020;letter-spacing:0.250px;">комментарии:</div>
<svg class="r" style="left:14.500px;top:-1px" width="8" height="4"><path d="M0 3L7 0.500L1 0Z" fill="#222"/></svg></div>
<svg class="r" style="left:357px;top:541px" width="1102" height="382" viewBox="357 541 1102 382">
<g font-size="13" fill="none" stroke-linejoin="round" stroke-linecap="butt">
<g stroke="#874848" stroke-width="2.8"><path d="M588 590.500H694.500M612.500 590.500V815.500H669.500M612.500 653H694.500M612.500 728H669.500"/></g>
<g fill="#874848"><circle cx="612.500" cy="590.500" r="4.400"/><circle cx="612.500" cy="653" r="4.400"/><circle cx="612.500" cy="728" r="4.400"/></g>
<g stroke="#000" stroke-width="2.8"><path d="M795.500 590.500H932M745.500 753H770V778H882M745.500 840.500H770V803H882M933 803H1157"/></g>
<path d="M745 653H770V615.500H932" stroke="#3c9a0c" stroke-width="2.8"/>
<path d="M645 753H669.500M645 840.500H669.500" stroke="#a528ee" stroke-width="2.8"/>
</g>
<g font-size="13">
<rect x="519.90" y="578.20" width="67.60" height="24.80" fill="#fff" stroke="#000" stroke-width="2.4"/>
<rect x="695.00" y="552.90" width="100.10" height="50.10" fill="#fff" stroke="#000" stroke-width="2.4"/><path d="M695.00 578.20H795.10" stroke="#000" stroke-width="2.4"/>
<rect x="695.00" y="615.40" width="49.60" height="50.10" fill="#fff" stroke="#000" stroke-width="2.4"/><path d="M695.00 640.70H744.60" stroke="#000" stroke-width="2.4"/>
<rect x="670.00" y="690.70" width="75.00" height="74.80" fill="#fff" stroke="#000" stroke-width="2.4"/><path d="M670.00 715.40H745.00" stroke="#000" stroke-width="2.4"/>
<rect x="670.00" y="778.20" width="75.00" height="74.80" fill="#fff" stroke="#000" stroke-width="2.4"/><path d="M670.00 803.00H745.00" stroke="#000" stroke-width="2.4"/>
<rect x="932.50" y="552.90" width="100.10" height="75.10" fill="#fff" stroke="#000" stroke-width="2.4"/><path d="M932.50 578.10H1032.60" stroke="#000" stroke-width="2.4"/>
<rect x="882.50" y="740.70" width="50.00" height="74.80" fill="#fff" stroke="#000" stroke-width="2.4"/><path d="M882.50 765.40H932.50" stroke="#000" stroke-width="2.4"/>
<rect x="1157.50" y="790.70" width="81.10" height="24.90" fill="#fff" stroke="#000" stroke-width="2.4"/>
<text x="552.90" y="595.80" fill="#000" text-anchor="middle" >DS18B20</text>
<text x="744.20" y="571.70" fill="#000" text-anchor="middle" >Number Change</text>
<text x="696.20" y="594.20" fill="#874848" text-anchor="start" letter-spacing="0.45">Value</text>
<text x="792.80" y="594.20" fill="#000" text-anchor="end" >Q</text>
<text x="719.80" y="632.50" fill="#000" text-anchor="middle" >SConv</text>
<text x="696.70" y="656.40" fill="#874848" text-anchor="start" >I</text>
<text x="742.30" y="656.40" fill="#3c9a0c" text-anchor="end" >Q</text>
<text x="707.50" y="707.50" fill="#000" text-anchor="middle" >I1 &gt; I2</text>
<text x="672.30" y="731.50" fill="#874848" text-anchor="start" >I1</text>
<text x="672.30" y="756.70" fill="#a528ee" text-anchor="start" >I2</text>
<text x="742.30" y="756.70" fill="#000" text-anchor="end" >Q</text>
<text x="707.50" y="795.00" fill="#000" text-anchor="middle" >I1 &lt;= I2</text>
<text x="672.30" y="818.60" fill="#874848" text-anchor="start" >I1</text>
<text x="672.30" y="844.20" fill="#a528ee" text-anchor="start" >I2</text>
<text x="742.30" y="844.20" fill="#000" text-anchor="end" >Q</text>
<text x="627.30" y="757.50" fill="#a528ee" text-anchor="start" >30</text>
<text x="627.30" y="845.00" fill="#a528ee" text-anchor="start" >25</text>
<text x="981.60" y="570.90" fill="#000" text-anchor="middle" letter-spacing="0.2">Nextion Set Attr</text>
<text x="934.70" y="594.20" fill="#000" text-anchor="start" >Send</text>
<text x="934.70" y="619.20" fill="#3c9a0c" text-anchor="start" letter-spacing="0.4">Value</text>
<text x="907.50" y="757.80" fill="#000" text-anchor="middle" >RS</text>
<text x="884.70" y="781.70" fill="#000" text-anchor="start" >S</text>
<text x="884.70" y="806.70" fill="#000" text-anchor="start" >R</text>
<text x="930.20" y="806.70" fill="#000" text-anchor="end" >Q</text>
<text x="1197.30" y="808.30" fill="#000" text-anchor="middle" >вентилятор</text>
</g>
</svg>
<div class="r" style="left:1459px;top:522px;width:1px;height:422px;background:#e3e3e3;"></div>
<div class="r" style="left:1479px;top:522px;width:1px;height:422px;background:#e3e3e3;"></div>
<div class="r" style="left:1462px;top:604px;width:13px;height:124px;box-sizing:border-box;border:1px solid #cfcfcf;border-radius:7px;background:#eee"></div>
<div class="r" style="left:357px;top:923px;width:1123px;height:1px;background:#e3e3e3;"></div>
<div class="r" style="left:359px;top:927px;width:622px;height:12px;box-sizing:border-box;border:1px solid #cfcfcf;border-radius:6px;background:#eee"></div>
<div class="r" style="left:357px;top:943px;width:1561px;height:1px;background:#dcdcdc;"></div>
</div>
<div class="r" style="left:1481px;top:470px;width:4.7px;height:473px;background:#dadada;"></div>
<div class="r" style="left:1485.6px;top:470px;width:1.6px;height:474px;background:#161616;"></div>
<div class="r" style="left:1481px;top:942.3px;width:6px;height:1.5px;background:#161616;"></div>
<!-- ===== status ===== -->
<div id="status">
<div class="btn" style="left:360.500px;top:950.700px"></div>
<svg class="r" style="left:369px;top:961px;" width="22" height="16" viewBox="0 0 22 16"><rect x="1.500" y="1.500" width="18.500" height="12.500" rx="1" fill="#fff" stroke="#8848a8" stroke-width="2.200"/><rect x="9" y="4.500" width="8.500" height="5.500" fill="#ddd"/><rect x="5" y="4.500" width="2.200" height="2" fill="#8848a8"/><rect x="5" y="7.500" width="2.200" height="4" fill="#8848a8"/></svg>
<div class="t" style="left:407.50px;top:962.07px;font-size:20px;color:#000;letter-spacing:0.240px;">Arduino Uno</div>
<div class="r" style="left:356px;top:996px;width:1562px;height:1px;background:#d6d6d6;"></div>
</div>
<!-- ===== block library ===== -->
<div id="library">
<div class="r" style="left:1492px;top:478px;width:143px;height:40px;box-sizing:border-box;border:2px solid #4272e4;border-radius:14px"></div>
<div class="t" style="left:1505.00px;top:489.97px;font-size:20px;color:#000;letter-spacing:0.466px;">Встроенные</div>
<div class="t" style="left:1647.75px;top:489.97px;font-size:20px;color:#000;letter-spacing:0.666px;">Пользовательские</div>
<svg class="r" style="left:1501.5px;top:539.25px;" width="9" height="13" viewBox="0 0 9 13"><path d="M1.300 1.300L7.300 6.500L1.300 11.700" fill="none" stroke="#484848" stroke-width="2.400" stroke-linecap="round" stroke-linejoin="round"/></svg>
<svg class="r" style="left:1520px;top:535.75px;" width="20" height="20" viewBox="0 0 20 20"><rect x="0.500" y="1.500" width="19" height="17" fill="#e8d4a0" stroke="#8a7a5a"/>
<path d="M3 4.500Q6 2 10 5T4 8" fill="none" stroke="#d08820" stroke-width="1.300"/>
<circle cx="15.500" cy="8" r="1.700" fill="#3c6cc0"/><circle cx="14.500" cy="14" r="1.900" fill="#e03020"/><circle cx="9.500" cy="15" r="1.900" fill="#70b020"/>
<path d="M16.500 1.500L6 13" stroke="#b07830" stroke-width="2.200"/><path d="M6.500 12L1.500 17L3.500 13Z" fill="#222" stroke="#222"/></svg>
<div class="t" style="left:1548.00px;top:536.82px;font-size:20px;color:#000;">Оформление</div>
<svg class="r" style="left:1501.5px;top:571.75px;" width="9" height="13" viewBox="0 0 9 13"><path d="M1.300 1.300L7.300 6.500L1.300 11.700" fill="none" stroke="#484848" stroke-width="2.400" stroke-linecap="round" stroke-linejoin="round"/></svg>
<svg class="r" style="left:1520px;top:568.25px;" width="20" height="20" viewBox="0 0 20 20"><path d="M0.700 2.500Q0.700 0.600 2.700 0.600H7.500L9.500 2.600H19.300V19.300H0.700Z" fill="#f7ec98" stroke="#8c8c8c" stroke-width="1"/><rect x="6.700" y="6" width="6" height="9.500" fill="#bcbcbc" stroke="#000" stroke-width="1.800"/><path d="M3 8.300H6M3 13.300H6M13.500 10.800H17.500" stroke="#000" stroke-width="1.500"/></svg>
<div class="t" style="left:1547.00px;top:569.32px;font-size:20px;color:#000;letter-spacing:0.600px;">Базовые элементы</div>
<svg class="r" style="left:1501.5px;top:604.25px;" width="9" height="13" viewBox="0 0 9 13"><path d="M1.300 1.300L7.300 6.500L1.300 11.700" fill="none" stroke="#484848" stroke-width="2.400" stroke-linecap="round" stroke-linejoin="round"/></svg>
<svg class="r" style="left:1520px;top:600.75px;" width="20" height="20" viewBox="0 0 20 20"><path d="M0.700 2.500Q0.700 0.600 2.700 0.600H7.500L9.500 2.600H19.300V19.300H0.700Z" fill="#f7ec98" stroke="#8c8c8c" stroke-width="1"/><rect x="1.500" y="5" width="17" height="11.500" fill="#fdfdfd"/><path d="M2.500 5.500L6.500 8L4 9.500ZM17.500 5.500L13.500 8L16 9.500ZM2.500 16L6.500 13.500L4 12ZM17.500 16L13.500 13.500L16 12Z" fill="#d02828"/></svg>
<div class="t" style="left:1547.00px;top:601.82px;font-size:20px;color:#000;letter-spacing:0.357px;">Масштабирование</div>
<svg class="r" style="left:1500px;top:640.75px;" width="13" height="9" viewBox="0 0 13 9"><path d="M1.300 1.300L6.500 7.300L11.700 1.300" fill="none" stroke="#484848" stroke-width="2.400" stroke-linecap="round" stroke-linejoin="round"/></svg>
<svg class="r" style="left:1520px;top:633.25px;" width="20" height="20" viewBox="0 0 20 20"><path d="M0.700 2.500Q0.700 0.600 2.700 0.600H7.500L9.500 2.600H19.300V19.300H0.700Z" fill="#f7ec98" stroke="#8c8c8c" stroke-width="1"/><rect x="5.700" y="6" width="6.300" height="9.500" fill="#fff" stroke="#000" stroke-width="1.800"/><path d="M12.500 8L15.500 10.800L12.500 13.500Z" fill="#fff" stroke="#000" stroke-width="1.200"/><path d="M2.500 8.300H5M2.500 13.300H5M15.500 10.800H18" stroke="#000" stroke-width="1.500"/></svg>
<div class="t" style="left:1547.00px;top:634.32px;font-size:20px;color:#000;letter-spacing:0.428px;">Триггеры</div>
<svg class="r" style="left:1546px;top:665.75px;" width="20" height="20" viewBox="0 0 20 20"><rect x="0" y="0" width="19" height="19" fill="#f6f0a8"/><path d="M0 0.500H19" stroke="#fbf8d8" stroke-width="1"/><path d="M0 17.500H19" stroke="#c8c090" stroke-width="1"/><path d="M0 18.500H19" stroke="#e8e0a0"/><path d="M1 13.500H9V6.500H17" fill="none" stroke="#188c18" stroke-width="1.800"/></svg>
<div class="t" style="left:1574.00px;top:666.82px;font-size:20px;color:#000;letter-spacing:0.333px;">[SR]</div>
<svg class="r" style="left:1546px;top:698.25px;" width="20" height="20" viewBox="0 0 20 20"><rect x="0" y="0" width="19" height="19" fill="#f6f0a8"/><path d="M0 0.500H19" stroke="#fbf8d8" stroke-width="1"/><path d="M0 17.500H19" stroke="#c8c090" stroke-width="1"/><path d="M0 18.500H19" stroke="#e8e0a0"/><rect x="9" y="6.500" width="8" height="7.500" fill="#4cae4c"/><path d="M1 13.500H9V6.500H17" fill="none" stroke="#188c18" stroke-width="1.800"/></svg>
<div class="t" style="left:1574.00px;top:699.32px;font-size:20px;color:#000;letter-spacing:-0.333px;">[TT]</div>
<svg class="r" style="left:1546px;top:730.75px;" width="20" height="20" viewBox="0 0 20 20"><rect x="0" y="0" width="19" height="19" fill="#f6f0a8"/><path d="M0 0.500H19" stroke="#fbf8d8" stroke-width="1"/><path d="M0 17.500H19" stroke="#c8c090" stroke-width="1"/><path d="M0 18.500H19" stroke="#e8e0a0"/><path d="M1 13.500H17M11 6V13.500" fill="none" stroke="#188c18" stroke-width="1.800"/></svg>
<div class="t" style="left:1574.00px;top:731.82px;font-size:20px;color:#000;letter-spacing:0.167px;">[Rtrig]</div>
<svg class="r" style="left:1546px;top:767.25px;" width="20" height="13" viewBox="0 0 20 13"><path d="M0 3H2.500M0 9H2.500M15 6H18.500" stroke="#1a1a90" stroke-width="1.500"/><rect x="3.300" y="1.200" width="11.500" height="10" rx="1" fill="#b4b4b4" stroke="#1a1a90" stroke-width="2"/></svg>
<div class="t" style="left:1574.00px;top:764.32px;font-size:20px;color:#000;letter-spacing:0.500px;">[Ftrig]</div>
<svg class="r" style="left:1546px;top:795.75px;" width="20" height="20" viewBox="0 0 20 20"><rect x="0" y="0" width="19" height="19" fill="#f6f0a8"/><path d="M0 0.500H19" stroke="#fbf8d8" stroke-width="1"/><path d="M0 17.500H19" stroke="#c8c090" stroke-width="1"/><path d="M0 18.500H19" stroke="#e8e0a0"/><path d="M1 6.500H9V13.500H17" fill="none" stroke="#188c18" stroke-width="1.800"/></svg>
<div class="t" style="left:1574.00px;top:796.82px;font-size:20px;color:#000;letter-spacing:0.333px;">[RS]</div>
<svg class="r" style="left:1501.5px;top:831.75px;" width="9" height="13" viewBox="0 0 9 13"><path d="M1.300 1.300L7.300 6.500L1.300 11.700" fill="none" stroke="#484848" stroke-width="2.400" stroke-linecap="round" stroke-linejoin="round"/></svg>
<svg class="r" style="left:1520px;top:828.25px;" width="20" height="20" viewBox="0 0 20 20"><rect x="0.500" y="1.500" width="19" height="17" fill="#a8d0f0" stroke="#5888b8"/>
<path d="M4 2.500H16L11.500 10L16 17.500H4L8.500 10Z" fill="#fff" stroke="#c89020" stroke-width="1"/>
<path d="M6 4H14L10 9.500ZM10 11L14.500 17H5.500Z" fill="#f0b020"/></svg>
<div class="t" style="left:1547.00px;top:829.32px;font-size:20px;color:#000;letter-spacing:0.333px;">Таймеры</div>
<svg class="r" style="left:1501.5px;top:864.25px;" width="9" height="13" viewBox="0 0 9 13"><path d="M1.300 1.300L7.300 6.500L1.300 11.700" fill="none" stroke="#484848" stroke-width="2.400" stroke-linecap="round" stroke-linejoin="round"/></svg>
<svg class="r" style="left:1520px;top:860.75px;" width="20" height="20" viewBox="0 0 20 20"><path d="M0.700 2.500Q0.700 0.600 2.700 0.600H7.500L9.500 2.600H19.300V19.300H0.700Z" fill="#f4ecb0" stroke="#8c8c8c" stroke-width="1"/><rect x="2.500" y="7.500" width="15" height="5" fill="#fff" stroke="#666"/><path d="M4.500 10H15.500" stroke="#444" stroke-width="1.800" stroke-dasharray="1.800 1"/><path d="M2 15H18" stroke="#b0a868" stroke-width="1"/></svg>
<div class="t" style="left:1548.00px;top:861.82px;font-size:20px;color:#000;letter-spacing:0.571px;">Счетчики</div>
<svg class="r" style="left:1501.5px;top:896.75px;" width="9" height="13" viewBox="0 0 9 13"><path d="M1.300 1.300L7.300 6.500L1.300 11.700" fill="none" stroke="#484848" stroke-width="2.400" stroke-linecap="round" stroke-linejoin="round"/></svg>
<svg class="r" style="left:1520px;top:893.25px;" width="20" height="20" viewBox="0 0 20 20"><path d="M0.700 2.500Q0.700 0.600 2.700 0.600H7.500L9.500 2.600H19.300V19.300H0.700Z" fill="#f6ea90" stroke="#8c8c8c" stroke-width="1"/><text x="10" y="14.500" font-size="10.500" text-anchor="middle" fill="#666" textLength="19" lengthAdjust="spacingAndGlyphs">2+2</text></svg>
<div class="t" style="left:1547.00px;top:894.32px;font-size:20px;color:#000;letter-spacing:0.222px;">Математика</div>
<div class="r" style="left:1873px;top:529px;width:21px;height:1px;background:#e3e3e3;"></div>
<div class="r" style="left:1873px;top:529px;width:1px;height:413px;background:#e3e3e3;"></div>
<div class="r" style="left:1893px;top:529px;width:1px;height:413px;background:#e3e3e3;"></div>
<div class="r" style="left:1876px;top:542px;width:13px;height:134px;box-sizing:border-box;border:1px solid #cfcfcf;border-radius:7px;background:#eee"></div>
<div class="r" style="left:1490px;top:921px;width:404px;height:1px;background:#e3e3e3;"></div>
<div class="r" style="left:1490px;top:921px;width:1px;height:21px;background:#e3e3e3;"></div>
<div class="r" style="left:1490px;top:942px;width:404px;height:1px;background:#e3e3e3;"></div>
<div class="r" style="left:1895.2px;top:471.8px;width:20.7px;height:470.2px;background:#a9a9a9;"></div>
<svg class="r" style="left:1899px;top:476px;" width="14" height="20" viewBox="0 0 14 20"><path d="M1.500 0.700V11.300L12 6Z" fill="#000"/><rect x="1.500" y="15.700" width="10.500" height="2.300" fill="#000"/></svg>
<div class="t bi" style="left:1896px;top:847px;font-size:17px;letter-spacing:0.375px;color:#fff;transform-origin:0 0;transform:rotate(-90deg);width:340px;height:19px;line-height:19px;">Библиотека функциональных блоков</div>
</div>
<!-- ===== windows taskbar ===== -->
<div id="taskbar">
<div class="r" style="left:0px;top:1031px;width:1920px;height:49px;background:#d5d5d5;"></div>
<div class="r" style="left:61px;top:1031px;width:428px;height:48px;background:#fff;"></div>
<svg class="r" style="left:20px;top:1045px;" width="20" height="20" viewBox="0 0 20 20"><path d="M0 2.800L8.600 1.600V9.500H0ZM9.600 1.450L20 0V9.500H9.600ZM0 10.500H8.600V18.400L0 17.200ZM9.600 10.500H20V20L9.600 18.550Z" fill="#000"/></svg>
<svg class="r" style="left:73px;top:1043px;" width="24" height="24" viewBox="0 0 24 24"><circle cx="15" cy="9" r="6.500" fill="none" stroke="#111" stroke-width="1.500"/><path d="M10.300 13.700L2 22" stroke="#111" stroke-width="1.600"/></svg>
<div class="t" style="left:110.00px;top:1048.45px;font-size:16.6px;color:#222;letter-spacing:0.848px;">Введите здесь текст для поиска</div>
<svg class="r" style="left:509px;top:1044px;" width="22" height="21" viewBox="0 0 22 21"><path d="M1 1.500H14M1 19.500H14" stroke="#111" stroke-width="1.200"/><rect x="2.500" y="5.500" width="10" height="10" fill="none" stroke="#111" stroke-width="1.300"/><path d="M19.500 1V7M19.500 14V20" stroke="#111" stroke-width="1.300"/><rect x="18" y="9" width="3" height="3" fill="#111"/></svg>
<svg class="r" style="left:569px;top:1041px;" width="30" height="26" viewBox="0 0 30 26"><path d="M1 3Q1 1 3 1H10L12.500 3.500H26Q28 3.500 28 5.500V8H1Z" fill="#e8a820"/>
<rect x="1" y="5.500" width="27.500" height="19.500" rx="1" fill="#fbd868"/>
<path d="M5 25V16.500Q5 15 6.500 15H23Q24.500 15 24.500 16.500V25H20V19.500H9.500V25Z" fill="#2c8ce8"/></svg>
<svg class="r" style="left:632px;top:1040.5px;" width="28" height="28" viewBox="0 0 28 28"><circle cx="14" cy="14" r="13.500" fill="#dd4b3e"/>
<path d="M14 14L2.300 7.250A13.500 13.500 0 0 0 14 27.500L20 17.500Z" fill="#1da362"/>
<path d="M14 14L20 17.500L14 27.500A13.500 13.500 0 0 0 25.700 7.250H14Z" fill="#fdd13f"/>
<path d="M2.300 7.250A13.500 13.500 0 0 1 25.700 7.250H14L8.500 11Z" fill="#dd4b3e"/>
<circle cx="14" cy="14" r="6.300" fill="#fff"/><circle cx="14" cy="14" r="5" fill="#4c8bf5"/></svg>
<svg class="r" style="left:693px;top:1041px;" width="30" height="27" viewBox="0 0 30 27"><rect x="8" y="0.500" width="21.500" height="26" rx="1.500" fill="#2b7cd3"/>
<rect x="8" y="7" width="21.500" height="6.500" fill="#2368c4"/><rect x="8" y="13.500" width="21.500" height="6.500" fill="#185abd"/><rect x="8" y="20" width="21.500" height="6.500" rx="1" fill="#103f91"/>
<rect x="0" y="6" width="15.500" height="15.500" rx="1.500" fill="#185abd"/>
<path d="M3 9.500L5.300 18L7.750 11.500L10.200 18L12.500 9.500" fill="none" stroke="#fff" stroke-width="1.700" stroke-linejoin="round"/></svg>
<div class="r" style="left:740px;top:1031px;width:61px;height:46px;background:#ececec;"></div>
<svg class="r" style="left:755px;top:1040px;" width="30" height="30" viewBox="0 0 16 16"><rect width="16" height="16" fill="#c6c6c6"/>
<path d="M5.700 3.600H12V8.800H9.500L8.500 15H5.700Z" fill="#fff"/><rect x="0" y="1.800" width="2" height="1.200" fill="#fff"/><rect x="0" y="5.600" width="2" height="1" fill="#fff"/><rect x="0" y="9.800" width="2" height="1.200" fill="#fff"/><rect x="0" y="13.600" width="2" height="1.200" fill="#fff"/>
<rect x="2" y="0" width="2.700" height="5.700" fill="#828282"/><rect x="4.700" y="1" width="1" height="5.700" fill="#000"/><rect x="3" y="5.700" width="2.700" height="1" fill="#000"/>
<rect x="0" y="1.200" width="1.800" height="0.700" fill="#000"/><rect x="0" y="5" width="1.800" height="0.700" fill="#000"/>
<rect x="5.700" y="3" width="6.300" height="0.700" fill="#000"/>
<rect x="12" y="2" width="3" height="6" fill="#828282"/><rect x="15" y="3" width="1" height="6" fill="#000"/><rect x="12.500" y="8" width="3.500" height="0.800" fill="#000"/>
<rect x="2" y="8.200" width="2.700" height="5.700" fill="#828282"/><rect x="4.700" y="9.200" width="1" height="5.700" fill="#000"/><rect x="3" y="13.900" width="2.700" height="1" fill="#000"/>
<rect x="0" y="9.200" width="1.800" height="0.700" fill="#000"/><rect x="0" y="13" width="1.800" height="0.700" fill="#000"/>
<rect x="5.700" y="11" width="2.500" height="0.700" fill="#000"/>
<path d="M7 7L10.500 8.400L9.200 9.300L8.400 10.800Z" fill="#000"/>
<path d="M9.200 9.300L10.600 8.500L16 12.400V15.400H13.400L8.700 11.600Z" fill="#f8e818"/>
<path d="M11.600 9.300L16 12.400V15.400H14.600L10.400 12.800Z" fill="#e42400"/>
<path d="M11.400 11.400L15.500 14.600M12.400 10.400L16 13" stroke="#f8e000" stroke-width="0.800" stroke-dasharray="0.900 0.900"/>
<path d="M11.800 12.400L15 14.900M13 11.600L16 13.800" stroke="#200000" stroke-width="0.800" stroke-dasharray="0.900 0.900"/></svg>
<svg class="r" style="left:817px;top:1040px;" width="31" height="30" viewBox="0 0 31 30"><path d="M0 0L30 5.900V21H27V8.700L3 4V25.900H5V7.400H14.900V16.500H18V7.400H22.800V26.900H14.200V18H11.200V29.100H0Z" fill="#08bcfc"/></svg>
<div class="r" style="left:559px;top:1077px;width:51px;height:3px;background:#0a78d8;"></div>
<div class="r" style="left:600px;top:1077px;width:10px;height:3px;background:#6cb0ec;"></div>
<div class="r" style="left:621px;top:1077px;width:51px;height:3px;background:#0a78d8;"></div>
<div class="r" style="left:683px;top:1077px;width:51px;height:3px;background:#0a78d8;"></div>
<div class="r" style="left:724px;top:1077px;width:10px;height:3px;background:#6cb0ec;"></div>
<div class="r" style="left:740px;top:1077px;width:61px;height:3px;background:#0a78d8;"></div>
<div class="r" style="left:807px;top:1077px;width:51px;height:3px;background:#0a78d8;"></div>
<svg class="r" style="left:1570px;top:1036px;" width="160" height="40" viewBox="1570 1036 160 40"><g fill="none" stroke="#1a1a1a" stroke-width="1.300">
<path d="M1580.300 1059L1588 1051L1595.700 1059"/>
<path d="M1612 1060H1624.500Q1627.700 1059.500 1627.500 1056.500Q1627.200 1053.500 1624 1053.300Q1623.300 1048.200 1618.500 1047.900Q1614.500 1047.800 1613 1051.500Q1608.800 1051.800 1608.600 1056Q1608.700 1059.600 1612 1060Z" fill="#e6e6e6"/>
<path d="M1613 1051.500Q1614.500 1047.800 1618.500 1047.900Q1623.300 1048.200 1624 1053.300L1618 1056L1610.500 1053Q1611.500 1051.800 1613 1051.500Z" fill="#8e8e8e" stroke="none"/>
<path d="M1610.500 1053L1618 1056L1609.500 1058Q1608.500 1055 1610.500 1053Z" fill="#b4b4b4" stroke="none"/>
<rect x="1642.300" y="1050.700" width="14" height="9.600"/>
<path d="M1657 1053.700V1057.300" stroke-width="1.800"/>
<rect x="1643.500" y="1052" width="5" height="7" fill="#000" stroke="none"/>
<path d="M1638.800 1048.200V1050.500M1641.200 1048.200V1050.500M1637.800 1050.700H1642.200V1052.500Q1642.200 1054 1640 1054V1060.500" stroke-width="1.100"/>
<path d="M1671.300 1061.500A13.500 13.500 0 0 1 1685.800 1048.700M1675.300 1061.500A9.500 9.500 0 0 1 1685.800 1052.700M1679.300 1061.500A5.500 5.500 0 0 1 1685.800 1056.700"/>
<circle cx="1684.600" cy="1061" r="1.500" fill="#111" stroke="none"/>
<path d="M1698.800 1052H1701.500L1704.300 1049V1061.500L1701.500 1058.500H1698.800Z"/>
<path d="M1708.300 1052.700Q1710 1055.200 1708.300 1057.800" stroke-width="1.200"/>
<path d="M1711.300 1049.500Q1714.500 1055.200 1711.300 1061" stroke="#7a7a7a" stroke-width="1"/>
<path d="M1714.800 1046.500Q1719.500 1055.200 1714.800 1064" stroke="#a6a6a6" stroke-width="0.900"/>
</g></svg>
<div class="t" style="left:1731.00px;top:1048.75px;font-size:14px;color:#111;letter-spacing:-0.500px;">РУС</div>
<div class="t" style="left:1794.00px;top:1036.82px;font-size:13.8px;color:#111;letter-spacing:-0.250px;">14:03</div>
<div class="t" style="left:1776.50px;top:1059.82px;font-size:13.8px;color:#111;letter-spacing:0.111px;">11.08.2020</div>
<svg class="r" style="left:1868px;top:1044px;" width="32" height="32" viewBox="0 0 32 32"><path d="M1 1H21V15H8V19.500L3.500 15H1Z" fill="#000"/><path d="M4.500 5H17.500M4.500 8H17.500M4.500 11H13" stroke="#d5d5d5" stroke-width="1.300"/><circle cx="20.500" cy="20.300" r="10" fill="#d8d8d8" fill-opacity="0.850" stroke="#555" stroke-width="0.900"/><text x="20.500" y="24.700" font-size="12.500" text-anchor="middle" fill="#111">1</text></svg>
<div class="r" style="left:1914px;top:1031px;width:1px;height:49px;background:#b4b4b4;"></div>
</div>
</body></html>
